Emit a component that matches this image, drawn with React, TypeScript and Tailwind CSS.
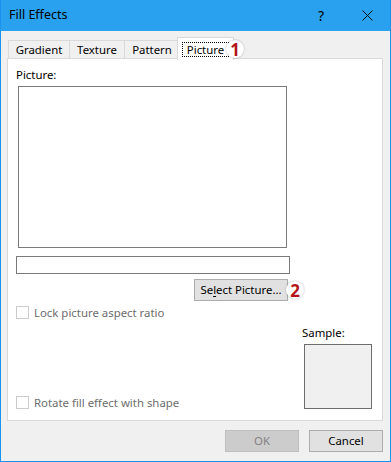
import React from "react";

const font = { fontFamily: '"Noto Sans", "Open Sans", sans-serif' };

function Badge({ n }: { n: string }) {
  return (
    <div className="absolute w-[18px] h-[18px] rounded-full bg-white shadow-[0_0_2px_rgba(0,0,0,0.3)] flex items-center justify-center text-[17px] font-bold leading-none text-[#b3151b]">
      {n}
    </div>
  );
}

function Tab({ label, w }: { label: string; w: string }) {
  return (
    <div
      className={`${w} h-[19px] mt-[3px] border border-b-0 border-[#d9d9d9] bg-[#f0f0f0] flex items-center justify-center text-[11.4px] text-black -mr-px`}
    >
      {label}
    </div>
  );
}

export default function App() {
  return (
    <div
      className="w-[391px] h-[462px] bg-[#f0f0f0] border-x border-b border-[#1a93ee] flex flex-col box-border"
      style={font}
    >
      {/* Title bar */}
      <div className="h-[31px] bg-[#2aa1ef] flex items-center pl-[8px] text-[12.5px] text-black shrink-0">
        <span>Fill Effects</span>
        <span className="ml-auto mr-[38px] text-[14px]">?</span>
        <svg width="11" height="11" viewBox="0 0 11 11" className="mr-[17px]">
          <path d="M0.5 0.5 L10.5 10.5 M10.5 0.5 L0.5 10.5" stroke="#111" strokeWidth="1" fill="none" />
        </svg>
      </div>

      <div className="pl-[6px] pr-[7px] flex flex-col">
        {/* Tabs */}
        <div className="flex mt-[6px] pl-[1px] h-[22px] items-start">
          <Tab label="Gradient" w="w-[62px]" />
          <Tab label="Texture" w="w-[56px]" />
          <Tab label="Pattern" w="w-[56px]" />
          <div className="relative w-[57px] h-[23px] border border-b-0 border-[#d9d9d9] bg-white z-10 flex items-center justify-center -ml-[2px]">
            <span className="border border-dotted border-black px-[4px] leading-[13px] text-[11.4px] text-black">Picture</span>
            <div className="absolute left-[48px] top-[2px]">
              <Badge n="1" />
            </div>
          </div>
        </div>

        {/* Panel */}
        <div className="h-[363px] -mt-px border border-[#d9d9d9] bg-white box-border pt-[8px] pl-[8px] flex flex-col text-[11.4px]">
          <div className="h-[16px] leading-[16px] text-black">Picture:</div>
          <div className="mt-[3px] ml-[2px] w-[269px] h-[162px] border border-[#7a7a7a] bg-white box-border" />
          <div className="mt-[8px] w-[274px] h-[18px] border border-[#7a7a7a] bg-white box-border" />
          <div className="relative mt-[5px] ml-[178px] w-[94px] h-[22px] border border-[#adadad] bg-[#e1e1e1] box-border flex items-center justify-center text-black">
            <span>
              Se<span className="underline underline-offset-2">l</span>ect Picture...
            </span>
            <div className="absolute left-[91px] top-[1px]">
              <Badge n="2" />
            </div>
          </div>
          <div className="mt-[5px] h-[13px] flex items-center">
            <div className="w-[13px] h-[13px] border border-[#cccccc] bg-white box-border" />
            <span className="ml-[5px] text-[#6d6d6d] leading-[13px]">Lock picture aspect ratio</span>
          </div>
          <div className="mt-[6px] flex items-end">
            <div className="h-[13px] flex items-center">
              <div className="w-[13px] h-[13px] border border-[#cccccc] bg-white box-border" />
              <span className="ml-[5px] text-[#6d6d6d] leading-[13px]">Rotate fill effect with shape</span>
            </div>
            <div className="ml-auto mr-[10px] flex flex-col">
              <div className="h-[16px] leading-[16px] text-black -ml-[2px]">Sample:</div>
              <div className="mt-[3px] w-[68px] h-[65px] border border-[#6d6d6d] bg-[#f0f0f0] box-border" />
            </div>
          </div>
        </div>

        {/* Buttons */}
        <div className="mt-[9px] flex justify-end gap-[10px] text-[11.4px]">
          <div className="w-[74px] h-[22px] border border-[#bfbfbf] bg-[#cccccc] box-border flex items-center justify-center text-[#838383]">
            OK
          </div>
          <div className="w-[74px] h-[22px] border border-[#adadad] bg-[#e1e1e1] box-border flex items-center justify-center text-black">
            Cancel
          </div>
        </div>
      </div>
    </div>
  );
}
